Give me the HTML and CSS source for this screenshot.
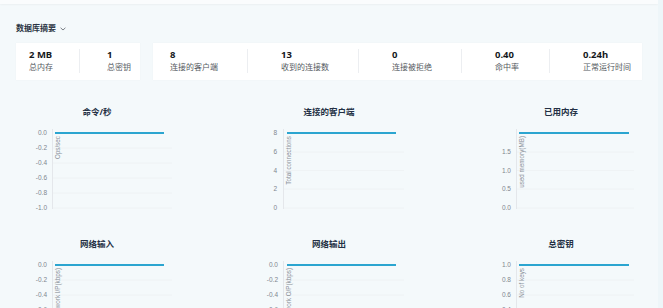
FILE: index.html
```html
<!DOCTYPE html>
<html lang="zh">
<head>
<meta charset="utf-8">
<title>数据库摘要</title>
<link rel="stylesheet" href="styles.css">
</head>
<body>
<div class="topbar"></div>
<main class="page">
  <div class="header">
    <span class="header-title">数据库摘要</span>
    <svg class="caret" width="6" height="4" viewBox="0 0 6 4"><polyline points="0.6,0.8 3,3 5.4,0.8" fill="none" stroke="#6b7078" stroke-width="0.9"/></svg>
  </div>

  <div class="cards">
    <div class="card card-small">
      <div class="stat first"><div class="val">2 MB</div><div class="lbl">总内存</div></div>
      <div class="stat last"><div class="val">1</div><div class="lbl">总密钥</div></div>
    </div>
    <div class="card card-big">
      <div class="stat first"><div class="val">8</div><div class="lbl">连接的客户端</div></div>
      <div class="stat"><div class="val">13</div><div class="lbl">收到的连接数</div></div>
      <div class="stat"><div class="val">0</div><div class="lbl">连接被拒绝</div></div>
      <div class="stat s4"><div class="val">0.40</div><div class="lbl">命中率</div></div>
      <div class="stat last"><div class="val">0.24h</div><div class="lbl">正常运行时间</div></div>
    </div>
  </div>

  <div class="charts">
    <div class="chart">
      <div class="chart-title">命令/秒</div>
      <svg class="plot" width="162" height="118" viewBox="0 0 162 118">
        <g class="grid"><line x1="36" y1="29" x2="156" y2="29"/><line x1="36" y1="44" x2="156" y2="44"/><line x1="36" y1="59" x2="156" y2="59"/><line x1="36" y1="74" x2="156" y2="74"/><line x1="36" y1="89" x2="156" y2="89"/></g>
        <line class="axis" x1="36.5" y1="10" x2="36.5" y2="90"/>
        <g class="ticks"><text x="31" y="14.5">0.0</text><text x="31" y="29.5">-0.2</text><text x="31" y="44.5">-0.4</text><text x="31" y="59.5">-0.6</text><text x="31" y="74.5">-0.8</text><text x="31" y="89.5">-1.0</text></g>
        <text class="ytitle" transform="translate(44,17) rotate(-90)">Ops/sec</text>
        <line class="series" x1="39" y1="14" x2="148" y2="14"/>
      </svg>
    </div>
    <div class="chart">
      <div class="chart-title">连接的客户端</div>
      <svg class="plot" width="162" height="118" viewBox="0 0 162 118">
        <g class="grid"><line x1="36" y1="33" x2="156" y2="33"/><line x1="36" y1="51.5" x2="156" y2="51.5"/><line x1="36" y1="70" x2="156" y2="70"/><line x1="36" y1="89" x2="156" y2="89"/></g>
        <line class="axis" x1="35.5" y1="10" x2="35.5" y2="90"/>
        <g class="ticks"><text x="29" y="14.5">8</text><text x="29" y="33.5">6</text><text x="29" y="52">4</text><text x="29" y="70.5">2</text><text x="29" y="89.5">0</text></g>
        <text class="ytitle" transform="translate(43,17) rotate(-90)">Total connections</text>
        <line class="series" x1="39" y1="14" x2="148" y2="14"/>
      </svg>
    </div>
    <div class="chart">
      <div class="chart-title">已用内存</div>
      <svg class="plot" width="162" height="118" viewBox="0 0 162 118">
        <g class="grid"><line x1="36" y1="33" x2="154" y2="33"/><line x1="36" y1="51.5" x2="154" y2="51.5"/><line x1="36" y1="70" x2="154" y2="70"/><line x1="36" y1="89" x2="154" y2="89"/></g>
        <line class="axis" x1="36.5" y1="10" x2="36.5" y2="90"/>
        <g class="ticks"><text x="31" y="33.5">1.5</text><text x="31" y="52">1.0</text><text x="31" y="70.5">0.5</text><text x="31" y="89.5">0.0</text></g>
        <text class="ytitle" transform="translate(44,17) rotate(-90)">used memory(MB)</text>
        <line class="series" x1="39" y1="14" x2="149" y2="14"/>
      </svg>
    </div>

    <div class="chart">
      <div class="chart-title">网络输入</div>
      <svg class="plot" width="162" height="118" viewBox="0 0 162 118">
        <g class="grid"><line x1="36" y1="29" x2="156" y2="29"/><line x1="36" y1="44" x2="156" y2="44"/><line x1="36" y1="59" x2="156" y2="59"/><line x1="36" y1="74" x2="156" y2="74"/><line x1="36" y1="89" x2="156" y2="89"/></g>
        <line class="axis" x1="36.5" y1="10" x2="36.5" y2="90"/>
        <g class="ticks"><text x="31" y="14.5">0.0</text><text x="31" y="29.5">-0.2</text><text x="31" y="44.5">-0.4</text><text x="31" y="59.5">-0.6</text><text x="31" y="74.5">-0.8</text><text x="31" y="89.5">-1.0</text></g>
        <text class="ytitle" transform="translate(44,17) rotate(-90)">Network I/P(kbps)</text>
        <line class="series" x1="39" y1="14" x2="148" y2="14"/>
      </svg>
    </div>
    <div class="chart">
      <div class="chart-title">网络输出</div>
      <svg class="plot" width="162" height="118" viewBox="0 0 162 118">
        <g class="grid"><line x1="36" y1="29" x2="156" y2="29"/><line x1="36" y1="44" x2="156" y2="44"/><line x1="36" y1="59" x2="156" y2="59"/><line x1="36" y1="74" x2="156" y2="74"/><line x1="36" y1="89" x2="156" y2="89"/></g>
        <line class="axis" x1="35.5" y1="10" x2="35.5" y2="90"/>
        <g class="ticks"><text x="30" y="14.5">0.0</text><text x="30" y="29.5">-0.2</text><text x="30" y="44.5">-0.4</text><text x="30" y="59.5">-0.6</text><text x="30" y="74.5">-0.8</text><text x="30" y="89.5">-1.0</text></g>
        <text class="ytitle" transform="translate(43,17) rotate(-90)">Network O/P(kbps)</text>
        <line class="series" x1="39" y1="14" x2="148" y2="14"/>
      </svg>
    </div>
    <div class="chart">
      <div class="chart-title">总密钥</div>
      <svg class="plot" width="162" height="118" viewBox="0 0 162 118">
        <g class="grid"><line x1="36" y1="29" x2="154" y2="29"/><line x1="36" y1="44" x2="154" y2="44"/><line x1="36" y1="59" x2="154" y2="59"/><line x1="36" y1="74" x2="154" y2="74"/><line x1="36" y1="89" x2="154" y2="89"/></g>
        <line class="axis" x1="36.5" y1="10" x2="36.5" y2="90"/>
        <g class="ticks"><text x="31" y="14.5">1.0</text><text x="31" y="29.5">0.8</text><text x="31" y="44.5">0.6</text><text x="31" y="59.5">0.4</text><text x="31" y="74.5">0.2</text><text x="31" y="89.5">0.0</text></g>
        <text class="ytitle" transform="translate(44,17) rotate(-90)">No of keys</text>
        <line class="series" x1="39" y1="14" x2="149" y2="14"/>
      </svg>
    </div>
  </div>
</main>
</body>
</html>
```

FILE: styles.css
```css
html, body {
  margin: 0;
  padding: 0;
  overflow: hidden;
}
body {
  width: 663px;
  height: 308px;
  background: #f4f9fb;
  font-family: "Noto Sans", "Noto Sans CJK SC", sans-serif;
  color: #1c1f24;
  border-right: 5px solid #eef6f9;
  box-sizing: border-box;
}
.topbar {
  height: 4px;
  background: #fafcfd;
  box-shadow: 0 1px 2px rgba(0, 0, 0, 0.04);
}
.page {
  padding: 18px 16px 0 16px;
}
.header {
  display: flex;
  align-items: center;
  gap: 4px;
  height: 12px;
}
.header-title {
  font-size: 8px;
  font-weight: 700;
  color: #2a3342;
  line-height: 12px;
}
.caret {
  display: block;
  margin-top: 1px;
}
.cards {
  display: flex;
  gap: 13px;
  margin-top: 9px;
}
.card {
  background: #ffffff;
  display: flex;
  align-items: center;
  padding: 6px 0 7px;
  box-shadow: 0 0 1px rgba(0, 0, 0, 0.05);
}
.card-small {
  width: 124px;
}
.card-big {
  width: 489px;
}
.stat {
  padding: 0 29px 0 33px;
  border-left: 1px solid #eceef1;
  white-space: nowrap;
}
.card-small .stat {
  padding: 0 26px 0 27px;
}
.stat.first {
  border-left: none;
  padding-left: 17px;
}
.card-small .stat.first {
  padding-left: 13px;
}
.stat.last {
  padding-right: 0;
}
.stat.s4 {
  padding-right: 30px;
}
.val {
  font-size: 9.5px;
  font-weight: 700;
  line-height: 12px;
  color: #15181c;
}
.lbl {
  font-size: 8px;
  line-height: 12px;
  color: #555a61;
}
.charts {
  display: grid;
  grid-template-columns: repeat(3, 162px);
  column-gap: 70px;
  margin-top: 25px;
}
.chart {
  display: flex;
  flex-direction: column;
}
.chart-title {
  text-align: center;
  font-size: 8.5px;
  font-weight: 700;
  line-height: 14px;
  height: 14px;
  color: #233044;
}
.plot {
  display: block;
}
.grid line {
  stroke: #eef1f4;
  stroke-width: 0.8;
}
.axis {
  stroke: #e4e7eb;
  stroke-width: 1;
}
.ticks text {
  font-family: "Liberation Sans", sans-serif;
  font-size: 6.5px;
  fill: #80868e;
  text-anchor: end;
  dominant-baseline: middle;
}
.ytitle {
  font-family: "Liberation Sans", sans-serif;
  font-size: 6.3px;
  fill: #8a9098;
  text-anchor: end;
}
.series {
  stroke: #2ba5d0;
  stroke-width: 2.2;
}
```
